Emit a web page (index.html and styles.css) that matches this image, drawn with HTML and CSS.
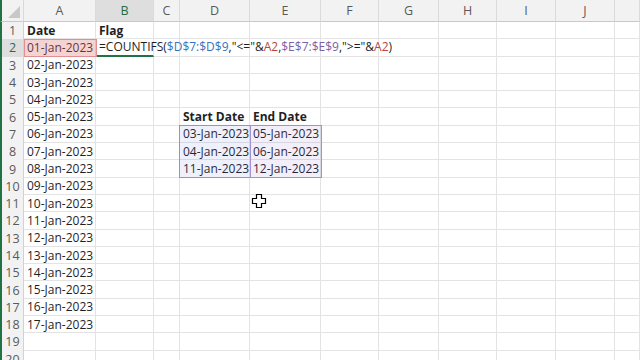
FILE: index.html
```html
<!DOCTYPE html>
<html lang="en">

<head>
    <meta charset="UTF-8">
    <meta name="viewport" content="width=device-width, initial-scale=1.0">
    <title>COUNTIFS between dates</title>
    <link rel="stylesheet" href="styles.css">
</head>

<body>
    <div class="sheet-wrap">
        <table class="sheet">
            <colgroup>
                <col class="w-rh"><col class="w-a"><col class="w-b"><col class="w-c"><col class="w-d"><col class="w-e">
                <col class="w-f"><col class="w-g"><col class="w-h"><col class="w-i"><col class="w-j"><col class="w-k">
            </colgroup>
            <thead>
                <tr>
                    <th class="corner"></th><th>A</th><th class="sel">B</th><th>C</th><th>D</th><th>E</th>
                    <th>F</th><th>G</th><th>H</th><th>I</th><th>J</th><th></th>
                </tr>
            </thead>
            <tbody>
                <tr><th>1</th><td class="bold">Date</td><td class="bold">Flag</td><td></td><td></td><td></td><td></td><td></td><td></td><td></td><td></td><td></td></tr>
                <tr><th class="sel">2</th><td>01-Jan-2023</td><td class="active">=COUNTIFS(<span class="ref-d">$D$7:$D$9</span>,"&lt;="&amp;<span class="ref-a">A2</span>,<span class="ref-e">$E$7:$E$9</span>,"&gt;="&amp;<span class="ref-a">A2</span>)</td><td></td><td></td><td></td><td></td><td></td><td></td><td></td><td></td><td></td></tr>
                <tr><th>3</th><td>02-Jan-2023</td><td></td><td></td><td></td><td></td><td></td><td></td><td></td><td></td><td></td><td></td></tr>
                <tr><th>4</th><td>03-Jan-2023</td><td></td><td></td><td></td><td></td><td></td><td></td><td></td><td></td><td></td><td></td></tr>
                <tr><th>5</th><td>04-Jan-2023</td><td></td><td></td><td></td><td></td><td></td><td></td><td></td><td></td><td></td><td></td></tr>
                <tr><th>6</th><td>05-Jan-2023</td><td></td><td></td><td class="bold">Start Date</td><td class="bold">End Date</td><td></td><td></td><td></td><td></td><td></td><td></td></tr>
                <tr><th>7</th><td>06-Jan-2023</td><td></td><td></td><td>03-Jan-2023</td><td>05-Jan-2023</td><td></td><td></td><td></td><td></td><td></td><td></td></tr>
                <tr><th>8</th><td>07-Jan-2023</td><td></td><td></td><td>04-Jan-2023</td><td>06-Jan-2023</td><td></td><td></td><td></td><td></td><td></td><td></td></tr>
                <tr><th>9</th><td>08-Jan-2023</td><td></td><td></td><td>11-Jan-2023</td><td>12-Jan-2023</td><td></td><td></td><td></td><td></td><td></td><td></td></tr>
                <tr><th>10</th><td>09-Jan-2023</td><td></td><td></td><td></td><td></td><td></td><td></td><td></td><td></td><td></td><td></td></tr>
                <tr><th>11</th><td>10-Jan-2023</td><td></td><td></td><td></td><td></td><td></td><td></td><td></td><td></td><td></td><td></td></tr>
                <tr><th>12</th><td>11-Jan-2023</td><td></td><td></td><td></td><td></td><td></td><td></td><td></td><td></td><td></td><td></td></tr>
                <tr><th>13</th><td>12-Jan-2023</td><td></td><td></td><td></td><td></td><td></td><td></td><td></td><td></td><td></td><td></td></tr>
                <tr><th>14</th><td>13-Jan-2023</td><td></td><td></td><td></td><td></td><td></td><td></td><td></td><td></td><td></td><td></td></tr>
                <tr><th>15</th><td>14-Jan-2023</td><td></td><td></td><td></td><td></td><td></td><td></td><td></td><td></td><td></td><td></td></tr>
                <tr><th>16</th><td>15-Jan-2023</td><td></td><td></td><td></td><td></td><td></td><td></td><td></td><td></td><td></td><td></td></tr>
                <tr><th>17</th><td>16-Jan-2023</td><td></td><td></td><td></td><td></td><td></td><td></td><td></td><td></td><td></td><td></td></tr>
                <tr><th>18</th><td>17-Jan-2023</td><td></td><td></td><td></td><td></td><td></td><td></td><td></td><td></td><td></td><td></td></tr>
                <tr><th>19</th><td></td><td></td><td></td><td></td><td></td><td></td><td></td><td></td><td></td><td></td><td></td></tr>
                <tr><th>20</th><td></td><td></td><td></td><td></td><td></td><td></td><td></td><td></td><td></td><td></td><td></td></tr>
            </tbody>
        </table>

        <!-- formula range highlights drawn over the grid -->
        <div class="range range-a2"></div>
        <div class="range range-d"></div>
        <div class="range range-e"></div>

        <!-- Excel cell cursor -->
        <svg class="cursor" width="16" height="16" viewBox="0 0 16 16">
            <path d="M5.5 1.5h5v4h4v5h-4v4h-5v-4h-4v-5h4z" fill="#fff" stroke="#000" stroke-width="1.2" />
        </svg>
    </div>
</body>

</html>
```

FILE: styles.css
```css
/* Page */
html,
body {
    margin: 0;
    padding: 0;
    height: 100%;
    overflow: hidden;
    background: #fff;
}

body {
    font-family: 'Open Sans', sans-serif;
    font-size: 12px;
    color: #1f1f1f;
}

.sheet-wrap {
    position: relative;
    width: 640px;
    height: 360px;
}

/* Grid */
.sheet {
    table-layout: fixed;
    border-collapse: separate;
    border-spacing: 0;
    width: 640px;
}

.w-rh { width: 24px; }
.w-a { width: 72px; }
.w-b { width: 58px; }
.w-c { width: 26px; }
.w-d { width: 70px; }
.w-e { width: 71px; }
.w-f { width: 58px; }
.w-g { width: 60px; }
.w-h { width: 58px; }
.w-i { width: 59px; }
.w-j { width: 59px; }
.w-k { width: 25px; }

.sheet tbody tr {
    height: 17.3px;
}

.sheet thead tr {
    height: 22px;
}

.sheet td {
    padding: 0 3px;
    white-space: nowrap;
    overflow: visible;
    border-right: 1px solid #e3e3e3;
    border-bottom: 1px solid #e3e3e3;
    line-height: 15px;
    box-sizing: border-box;
}

.sheet th {
    padding: 0;
    font-weight: normal;
    color: #5a5a5a;
    background: #f2f2f2;
    text-align: center;
    box-sizing: border-box;
}

.sheet thead th {
    border-right: 1px solid #dadada;
    border-bottom: 1px solid #c9c9c9;
    font-size: 12.5px;
}

.sheet tbody th {
    border-right: 1px solid #d2d2d2;
    border-left: 2px solid #217346;
    font-size: 12.5px;
    line-height: 15px;
}

.sheet th.sel {
    background: #dedede;
    color: #2b6a45;
}

.sheet .corner {
    position: relative;
    border-left: 2px solid #217346;
}

.corner::after {
    content: "";
    position: absolute;
    right: 3px;
    bottom: 3px;
    border-style: solid;
    border-width: 0 0 12px 12px;
    border-color: transparent transparent #c8c8c8 transparent;
}

.bold {
    font-weight: bold;
}

/* Cell being edited */
.sheet td.active {
    border-bottom: 2px solid #217346;
}

.ref-d { color: #3a72c0; }
.ref-a { color: #b8473e; }
.ref-e { color: #7c5fa8; }

/* Range highlights */
.range {
    position: absolute;
    box-sizing: border-box;
}

.range-a2 {
    left: 24px;
    top: 39px;
    width: 73px;
    height: 18px;
    background: rgba(225, 110, 110, 0.3);
    border: 1px solid #e09090;
}

.range-d {
    left: 179px;
    top: 125px;
    width: 72px;
    height: 53px;
    background: rgba(90, 110, 220, 0.1);
    border: 1px solid #7f9ad6;
}

.range-e {
    left: 250px;
    top: 125px;
    width: 72px;
    height: 53px;
    background: rgba(140, 100, 210, 0.1);
    border: 1px solid #a590cf;
}

.cursor {
    position: absolute;
    left: 251px;
    top: 193px;
}
```
